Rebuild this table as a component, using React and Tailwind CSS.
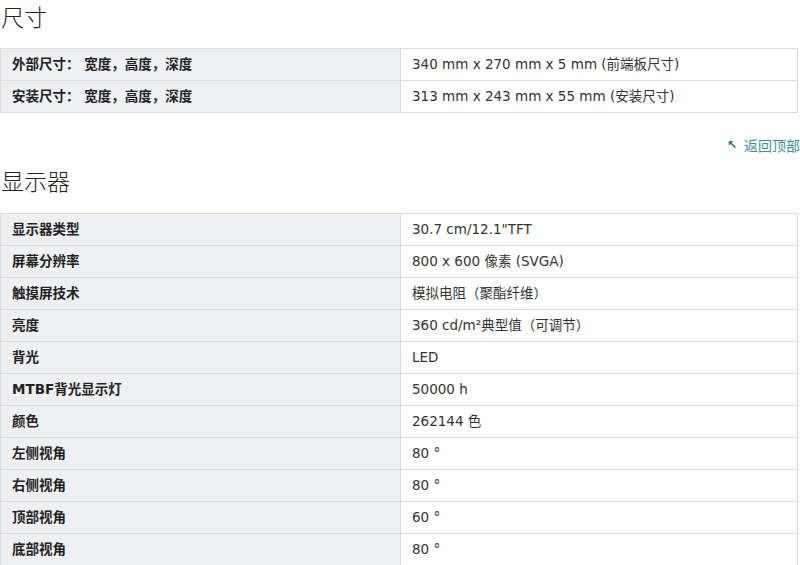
import React from "react";

const font = { fontFamily: '"DejaVu Sans", "Noto Sans CJK SC", sans-serif' };
const cjk = { fontFamily: '"Noto Sans CJK SC", sans-serif' };

function SpecTable({ rows }) {
  return (
    <table className="w-[798px] table-fixed border-collapse border border-[#dcdcdc]">
      <tbody>
        {rows.map(([k, v], i) => (
          <tr key={i} className="h-[32px]">
            <td className="w-[400px] border border-[#dcdcdc] bg-[#eef0f3] pl-[11px] text-[13.5px] font-bold text-[#222] leading-none">
              {k}
            </td>
            <td className="border border-[#dcdcdc] bg-white pl-[11px] text-[13.5px] text-[#333] leading-none">
              {v}
            </td>
          </tr>
        ))}
      </tbody>
    </table>
  );
}

export default function App() {
  return (
    <div className="w-[800px] h-[565px] overflow-hidden bg-white" style={font}>
      <h2 className="text-[23px] font-light text-[#222] leading-[32px] h-[32px] pl-[1px]" style={cjk}>
        尺寸
      </h2>
      <div className="mt-[16px]">
        <SpecTable
          rows={[
            ["外部尺寸： 宽度，高度，深度", "340 mm x 270 mm x 5 mm (前端板尺寸)"],
            ["安装尺寸： 宽度，高度，深度", "313 mm x 243 mm x 55 mm (安装尺寸)"],
          ]}
        />
      </div>
      <div className="mt-[23px] flex items-center h-[18px] pl-[727px] text-[14px] text-[#3a8f9e] whitespace-nowrap">
        <span className="text-[#1f6a7c] text-[12px] font-bold mr-[7px]">↖</span>
        <span style={cjk}>返回顶部</span>
      </div>
      <h2 className="mt-[10px] text-[23px] font-light text-[#222] leading-[32px] h-[32px] pl-[1px]" style={cjk}>
        显示器
      </h2>
      <div className="mt-[17px]">
        <SpecTable
          rows={[
            ["显示器类型", "30.7 cm/12.1\"TFT"],
            ["屏幕分辨率", "800 x 600 像素 (SVGA)"],
            ["触摸屏技术", "模拟电阻（聚酯纤维）"],
            ["亮度", "360 cd/m²典型值（可调节）"],
            ["背光", "LED"],
            ["MTBF背光显示灯", "50000 h"],
            ["颜色", "262144 色"],
            ["左侧视角", "80 °"],
            ["右侧视角", "80 °"],
            ["顶部视角", "60 °"],
            ["底部视角", "80 °"],
          ]}
        />
      </div>
    </div>
  );
}
